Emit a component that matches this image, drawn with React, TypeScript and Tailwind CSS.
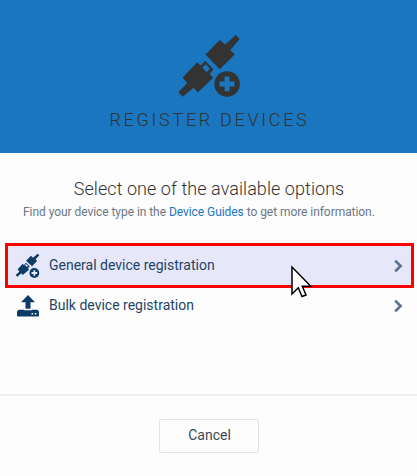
import React from "react";

function PlugIcon({ className, holeClass }: { className: string; holeClass: string }) {
  return (
    <svg viewBox="54 29 187 187" className={className} fill="currentColor">
      <path d="M228 29L240 41L212 74L225 88L180 132L137 88L180 44L196 58Z" />
      <path
        fillRule="evenodd"
        d="M112 111L122 121L136 107L161 133L149 147L160 159L131 186L114 202L101 188L68 215L55 202L82 174L68 157ZM138 117L128 127L140 141L150 131Z"
      />
      <circle cx="202" cy="177" r="38.5" />
      <path className={holeClass} d="M194.5 154h15v15h15v15h-15v15h-15v-15h-15v-15h15z" />
    </svg>
  );
}

function SmallPlugIcon() {
  return (
    <svg viewBox="45 55 75 75" className="h-[25px] w-[25px] text-[#0b3b66]" fill="currentColor">
      <path d="M113 57L118 62L107 74L111 79L96 95L78 78L93 63L99 69Z" />
      <path
        fillRule="evenodd"
        d="M68 87L72 91L78 84L89 95L84 100L87 105L68 121L64 116L52 126L47 121L58 111L53 104ZM78 88L75 92L80 96L84 93Z"
      />
      <circle cx="103" cy="115" r="16" fill="#e6e7f8" />
      <circle cx="103" cy="115" r="14.7" />
      <path fill="#e6e7f8" d="M100.3 106.5h5.4v5.8h5.8v5.4h-5.8v5.8h-5.4v-5.8h-5.8v-5.4h5.8z" />
    </svg>
  );
}

function UploadIcon() {
  return (
    <svg viewBox="0 0 22 22" className="h-[22px] w-[22px] text-[#0b3b66]" fill="currentColor">
      <path d="M11 0L18 7.2H13.5V13.7H8.5V7.2H4Z" />
      <path
        fillRule="evenodd"
        d="M1.5 14.7H7.2V15.2H14.8V14.7H20.5L22 16.5V20.5Q22 21.5 21 21.5H1Q0 21.5 0 20.5V16.5ZM14.5 18V19.6H16.1V18ZM17.8 18V19.6H19.4V18Z"
      />
    </svg>
  );
}

function Chevron() {
  return (
    <svg viewBox="0 0 9 14" className="h-3.5 w-[9px]" fill="none" stroke="#5e7290" strokeWidth="2.7">
      <path d="M1.2 1.6L6.6 7L1.2 12.4" />
    </svg>
  );
}

function Cursor() {
  return (
    <svg viewBox="0 0 22 33" className="absolute left-[291px] top-[265px] h-[33px] w-[22px]">
      <path
        d="M1 2V29L7.3 22.7L11 31.5L15 30L11.3 21.3H19.8Z"
        fill="#fff"
        stroke="#000"
        strokeWidth="1.5"
      />
    </svg>
  );
}

export default function App() {
  return (
    <div className="relative flex h-[476px] w-[417px] flex-col overflow-hidden bg-[#fdfdfd] font-[Roboto,sans-serif]">
      <header className="flex h-[153px] flex-col items-center bg-[#1976bf] pt-[35px] text-[#333]">
        <PlugIcon className="h-[62px] w-[62px]" holeClass="fill-[#1976bf]" />
        <h1 className="mt-[11px] whitespace-nowrap pl-[2px] text-[18px] font-light leading-6 tracking-[2.7px]">
          REGISTER DEVICES
        </h1>
      </header>
      <main className="flex h-[243px] flex-col border-b-2 border-[#efeff2] pt-6">
        <h2 className="whitespace-nowrap pl-px text-center text-[18px] font-light leading-6 tracking-[0.06px] text-[#333]">
          Select one of the available options
        </h2>
        <p className="mt-0.5 whitespace-nowrap pl-[23px] text-[12px] leading-[18px] tracking-[-0.055px] text-[#6b7785]">
          Find your device type in the <a className="text-[#1976bf]">Device Guides</a> to get more information.
        </p>
        <div className="ml-[5px] mt-[22px] flex h-[45px] w-[409px] items-center border-3 border-[#fe0000] bg-[#e6e7f8] pl-[7px] pr-2 text-[14px] text-[#1f4468]">
          <SmallPlugIcon />
          <span className="ml-[9px] flex-1">General device registration</span>
          <Chevron />
        </div>
        <div className="flex h-[35px] items-center pl-[17px] pr-[14px] text-[14px] text-[#1f4468]">
          <UploadIcon />
          <span className="ml-[10px] flex-1">Bulk device registration</span>
          <Chevron />
        </div>
      </main>
      <footer className="flex justify-center pt-[23px]">
        <button className="h-[34px] w-[100px] rounded-[2px] border border-[#e5e5e7] pb-0.5 pl-0.5 text-[14px] text-[#3b4858]">
          Cancel
        </button>
      </footer>
      <Cursor />
    </div>
  );
}
